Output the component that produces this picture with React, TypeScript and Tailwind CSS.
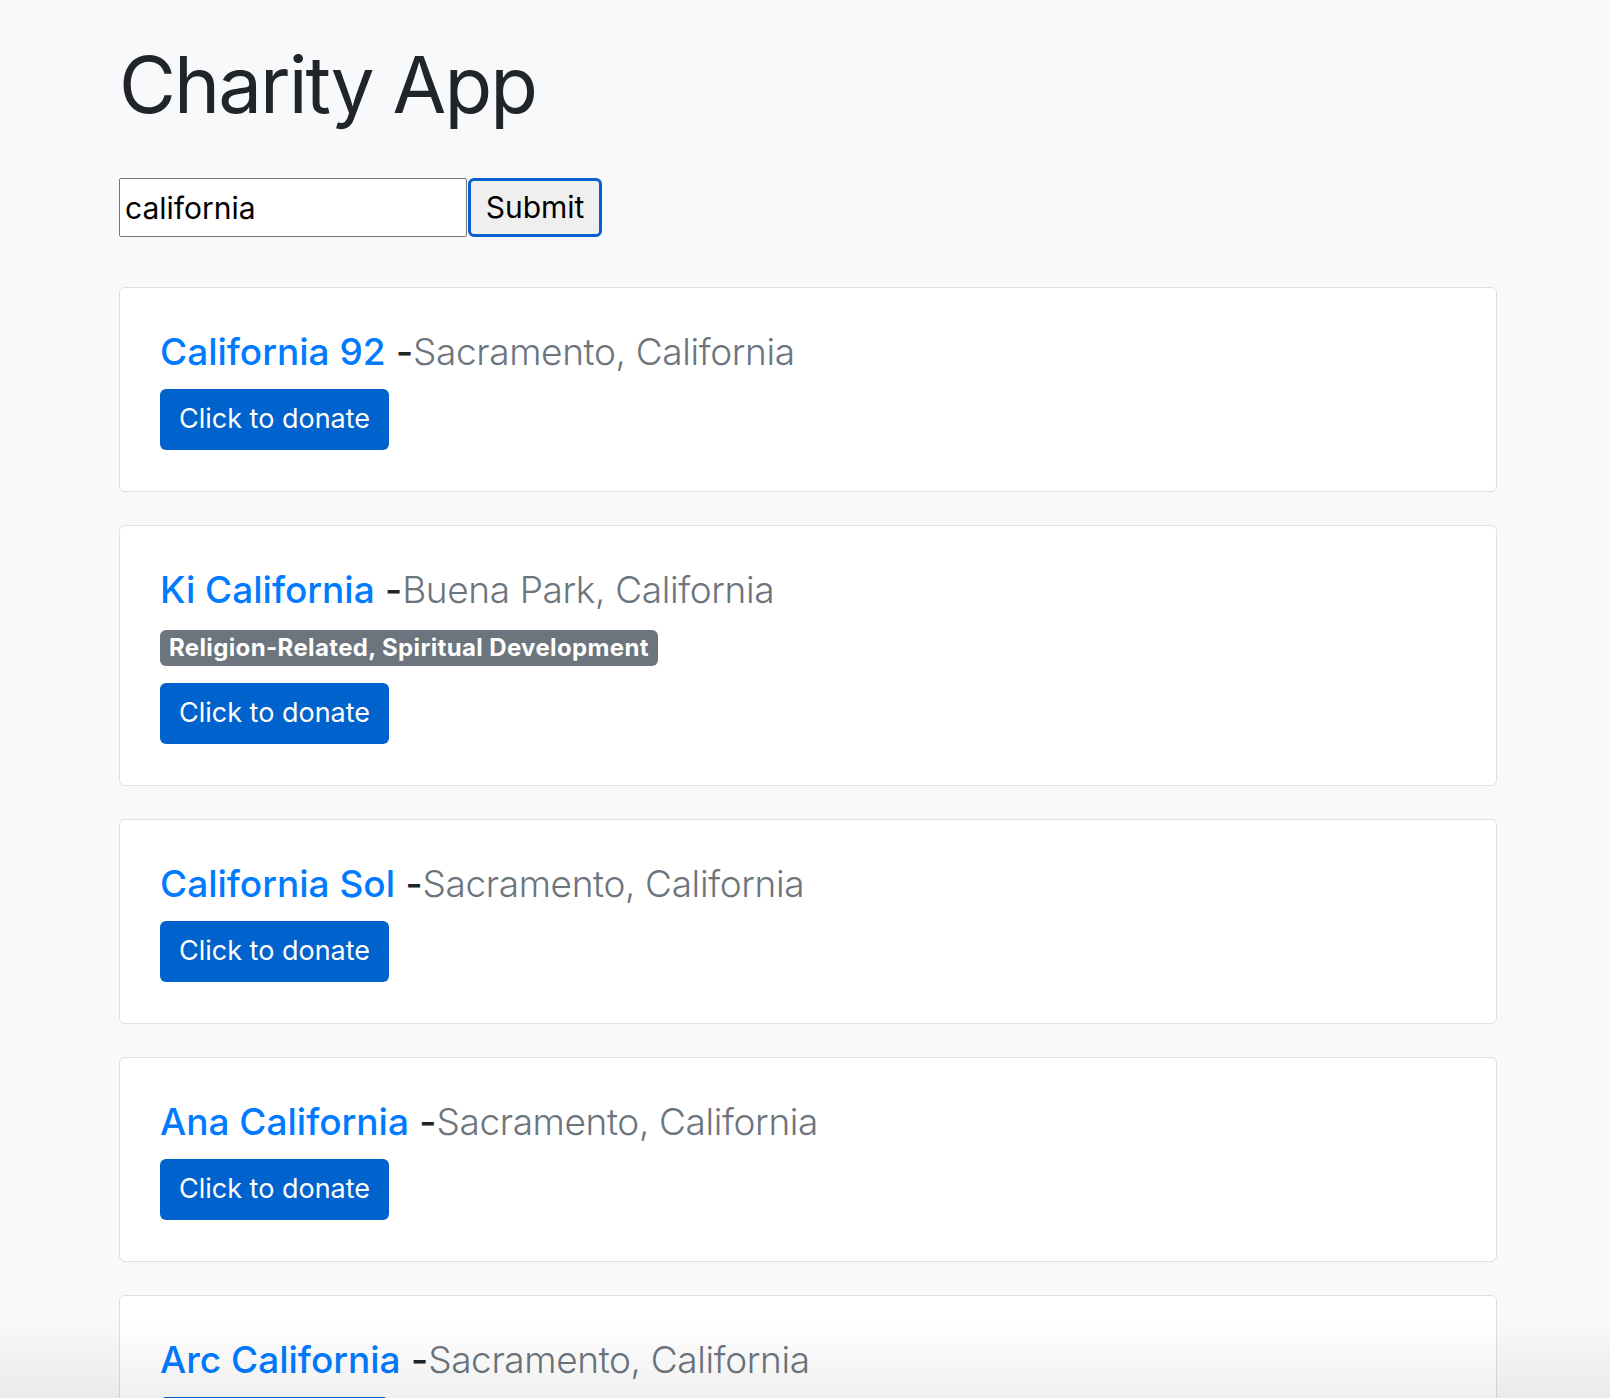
const charities = [
  { name: "California 92", city: "Sacramento, California" },
  { name: "Ki California", city: "Buena Park, California", category: "Religion-Related, Spiritual Development" },
  { name: "California Sol", city: "Sacramento, California" },
  { name: "Ana California", city: "Sacramento, California" },
  { name: "Arc California", city: "Sacramento, California" },
];

type Charity = { name: string; city: string; category?: string };

function CharityCard({ charity }: { charity: Charity }) {
  return (
    <div className="w-[1378px] bg-white border border-[#dfdfdf] rounded-[6px] px-[40px] pt-[42px] pb-[41px]">
      <h5 className="text-[37px] leading-[44px] whitespace-nowrap">
        <a href="#" className="text-[#007bff] font-medium">{charity.name}</a>{" "}
        <span className="text-[#212529] font-medium">-</span>
        <span className="text-[#6c757d] font-light tracking-[-0.01em]">{charity.city}</span>
      </h5>
      {charity.category && (
        <div className="mt-[18px] mb-[2px]">
          <span className="inline-block bg-[#6c757d] text-white font-bold text-[24px] tracking-[0.015em] leading-[36px] h-[36px] px-[9px] rounded-[6px]">
            {charity.category}
          </span>
        </div>
      )}
      <button className="mt-[15px] h-[61px] w-[229px] bg-[#0062cc] text-white text-[27px] rounded-[6px]">
        Click to donate
      </button>
    </div>
  );
}

export default function App() {
  return (
    <div className="relative h-[1398px] bg-[#f8f9fa] text-[#212529] overflow-hidden" style={{ fontFamily: "Inter, 'Noto Sans', sans-serif" }}>
      <div className="pl-[119px] pt-[38px]">
        <h1 className="text-[78px] leading-[94px] font-normal tracking-[-0.025em]">Charity App</h1>

        <form className="mt-[46px] flex items-center" onSubmit={(e) => e.preventDefault()}>
          <input
            defaultValue="california"
            className="w-[348px] h-[59px] bg-white border border-[#767676] rounded-[2px] px-[5px] text-[30px] text-black outline-none"
          />
          <button className="ml-[1px] w-[134px] h-[59px] bg-[#efefef] border-[3px] border-[#0a5fd0] rounded-[6px] text-[30px] text-black">
            Submit
          </button>
        </form>

        <div className="mt-[50px] flex flex-col gap-[33px]">
          {charities.map((c) => (
            <CharityCard key={c.name} charity={c} />
          ))}
        </div>
      </div>

      {/* bottom window shadow */}
      <div className="pointer-events-none absolute left-0 right-0 bottom-0 h-[80px] bg-gradient-to-b from-transparent to-black/[0.06]" />
    </div>
  );
}
